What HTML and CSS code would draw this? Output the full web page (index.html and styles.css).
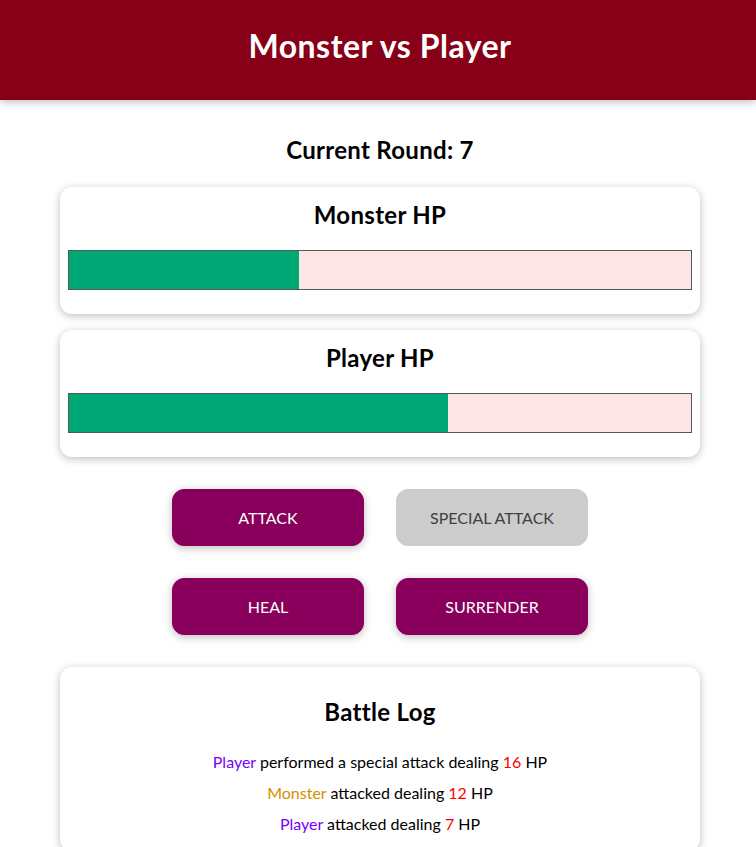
FILE: index.html
```html
<!DOCTYPE html>
<html lang="en">
<head>
<meta charset="utf-8">
<title>Monster vs Player</title>
<link rel="stylesheet" href="styles.css">
</head>
<body>
<header class="page-header">
  <h1 class="page-title">Monster vs Player</h1>
</header>
<main class="game">
  <h2 class="round">Current Round: 7</h2>
  <section class="container">
    <h2 class="hp-title">Monster HP</h2>
    <div class="healthbar"><div class="healthbar__value" style="width: 37%"></div></div>
  </section>
  <section class="container">
    <h2 class="hp-title">Player HP</h2>
    <div class="healthbar"><div class="healthbar__value" style="width: 61%"></div></div>
  </section>
  <section class="controls">
    <button class="btn">ATTACK</button>
    <button class="btn" disabled>SPECIAL ATTACK</button>
    <button class="btn">HEAL</button>
    <button class="btn">SURRENDER</button>
  </section>
  <section class="container log">
    <h2 class="log-title">Battle Log</h2>
    <ul class="log-list">
      <li><span class="log--player">Player</span> performed a special attack dealing <span class="log--damage">16</span> HP</li>
      <li><span class="log--monster">Monster</span> attacked dealing <span class="log--damage">12</span> HP</li>
      <li><span class="log--player">Player</span> attacked dealing <span class="log--damage">7</span> HP</li>
    </ul>
  </section>
</main>
</body>
</html>
```
FILE: styles.css
```css
* { box-sizing: border-box; }
html { font-family: "Lato", "Noto Sans", sans-serif; }
body { margin: 0; color: #000; background: #fff; }

.page-header {
  background-color: #880017;
  color: #fff;
  text-align: center;
  height: 100px;
  padding: 23px 0 0 4px;
  box-shadow: 0 2px 8px rgba(0, 0, 0, 0.26);
  margin-bottom: 33px;
}
.page-title {
  margin: 0;
  font-size: 32px;
  line-height: 46px;
  font-weight: 700;
  letter-spacing: 0.5px;
}

.game { padding-left: 4px; }

.round {
  text-align: center;
  font-size: 24px;
  line-height: 34px;
  margin: 0 0 20px;
  letter-spacing: 0.3px;
}

.container {
  width: 640px;
  margin: 16px auto;
  padding: 8px;
  text-align: center;
  background: #fff;
  border-radius: 12px;
  box-shadow: 0 2px 8px rgba(0, 0, 0, 0.26);
}
.hp-title {
  font-size: 24px;
  line-height: 34px;
  margin: 3px 0 18px;
  letter-spacing: 0.3px;
}
.healthbar {
  width: 100%;
  height: 40px;
  border: 1px solid #575757;
  margin: 16px 0;
  background: #fde5e5;
}
.healthbar__value {
  height: 100%;
  background-color: #00a876;
}

.controls {
  width: 640px;
  margin: 16px auto;
  display: flex;
  flex-wrap: wrap;
  justify-content: center;
}
.btn {
  font: inherit;
  font-size: 16px;
  line-height: 23px;
  border: 1px solid #88005b;
  background-color: #88005b;
  color: #fff;
  padding: 16px 32px;
  border-radius: 12px;
  margin: 16px;
  width: 192px;
  box-shadow: 0 2px 8px rgba(0, 0, 0, 0.26);
}
.btn:disabled {
  background-color: #ccc;
  border-color: #ccc;
  color: #3f3f3f;
  box-shadow: none;
}

.log-title {
  font-size: 24px;
  line-height: 34px;
  margin: 20px 0 21px;
  letter-spacing: 0.3px;
}
.log-list {
  list-style: none;
  margin: 0;
  padding: 0;
  font-size: 16px;
  line-height: 23px;
}
.log-list li { margin: 8px 0; }
.log--player { color: #7700ff; }
.log--monster { color: #da8d00; }
.log--damage { color: #ff0000; }
```
